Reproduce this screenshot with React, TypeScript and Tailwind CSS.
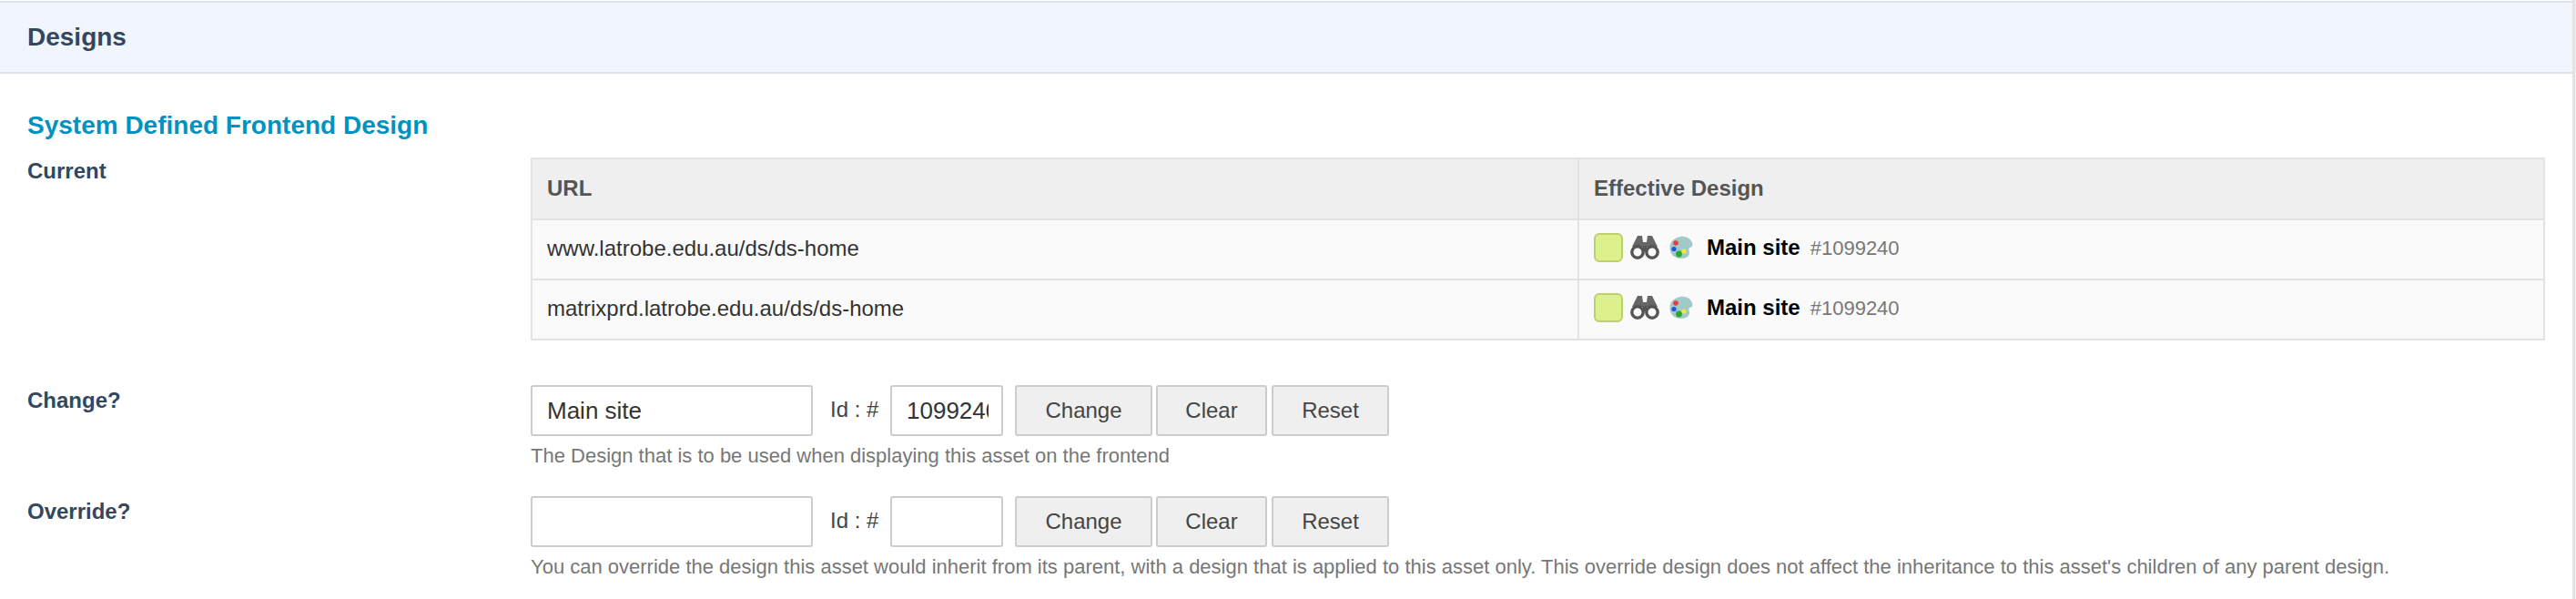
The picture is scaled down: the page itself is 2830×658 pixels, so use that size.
import React from "react";

const sans = "font-['Liberation_Sans',Arial,sans-serif]";

function Binoculars() {
  return (
    <svg width="32" height="28" viewBox="0 0 32 28" className="blur-[0.6px]">
      <path d="M8 1 L13 1 L14 8 L18 8 L19 1 L24 1 L30 13 L2 13 Z" fill="#666" />
      <circle cx="8" cy="19" r="6.2" fill="#fafafa" stroke="#555" strokeWidth="3.4" />
      <circle cx="24" cy="19" r="6.2" fill="#fafafa" stroke="#555" strokeWidth="3.4" />
      <rect x="13.5" y="12" width="5" height="6" fill="#555" />
    </svg>
  );
}

function Palette() {
  return (
    <svg width="26" height="26" viewBox="0 0 26 26" className="blur-[0.6px]">
      <path d="M12 1 C19 0 25 4 25.5 10 C25.5 12.5 22.5 12.5 21.5 14 C20.5 16 24 19 20 23 C16 26 8 25.5 4 22 C0 18 -0.5 11 2 7 C4.5 3.5 8 1.5 12 1 Z" fill="#9fcac7" />
      <circle cx="7" cy="8" r="2.8" fill="#ea3b3b" />
      <circle cx="5" cy="14.5" r="2.6" fill="#1f55e6" />
      <circle cx="10.5" cy="20" r="3.4" fill="#2fa52f" />
      <circle cx="16" cy="17" r="2.6" fill="#f4e93a" />
    </svg>
  );
}

function DesignCell() {
  return (
    <div className="flex items-center relative -top-[1px]">
      <span className="w-[32px] h-[32px] rounded-[6px] bg-[#dcf08c] border-2 border-[#bfcf70] shrink-0" />
      <span className="ml-[8px] flex"><Binoculars /></span>
      <span className="ml-[11px] flex"><Palette /></span>
      <span className="ml-[15px] text-[24px] font-bold text-black">Main site</span>
      <span className="ml-[11px] text-[22px] text-[#777]">#1099240</span>
    </div>
  );
}

function PickerRow({ label, name, id, help, className }: { label: string; name: string; id: string; help: string; className: string }) {
  const field = "h-[56px] bg-white border-2 border-[#ccc] rounded-[3px] pl-[16px] pr-[14px] text-[26px] text-[#333] outline-none";
  const btn = "h-[56px] bg-[#efefef] border-2 border-[#ccc] rounded-[3px] text-[24px] text-[#444]";
  return (
    <div className={`flex ${className}`}>
      <div className="w-[583px] pl-[30px] pt-[3px] text-[24px] leading-[28px] font-bold text-[#34475f] shrink-0">{label}</div>
      <div>
        <div className="flex items-center">
          <input readOnly value={name} className={`${field} w-[310px]`} />
          <span className="ml-[19px] w-[66px] text-[24px] text-[#444] -mt-[2px]">Id : #</span>
          <input readOnly value={id} className={`${field} w-[124px]`} />
          <button className={`${btn} ml-[13px] w-[151px]`}>Change</button>
          <button className={`${btn} ml-[4px] w-[122px]`}>Clear</button>
          <button className={`${btn} ml-[5px] w-[129px]`}>Reset</button>
        </div>
        <p className="mt-[9px] text-[22px] leading-[26px] text-[#777] whitespace-nowrap">{help}</p>
      </div>
    </div>
  );
}

export default function App() {
  const th = "border-2 border-[#e3e3e3] pl-[16px] pr-[18px] pb-[2px] text-left text-[24px] font-bold text-[#555]";
  const td = "border-2 border-[#e3e3e3] pl-[16px] pr-[18px] pb-[2px] text-[24px] text-[#333]";
  return (
    <div className={`${sans} w-[2830px] h-[658px] bg-[#f1f1f1] overflow-hidden`}>
      <div className="w-[2829px] h-[658px] bg-white border-r-[3px] border-[#e3e3e3]">
        <div className="pt-[1px]">
          <div className="h-[80px] bg-[#f1f6fe] border-y-2 border-[#dde3ed] flex items-center pl-[30px] text-[28px] font-bold text-[#34475f]">
            Designs
          </div>
        </div>
        <h2 className="mt-[40px] pl-[30px] text-[28px] leading-[34px] font-bold text-[#0093c1]">System Defined Frontend Design</h2>
        <div className="flex mt-[18px]">
          <div className="w-[583px] pl-[30px] pt-[1px] text-[24px] leading-[28px] font-bold text-[#34475f] shrink-0">Current</div>
          <table className="w-[2213px] border-collapse table-fixed h-[199px]">
            <thead>
              <tr className="bg-[#efefef] h-[67px]">
                <th className={`${th} w-[1150px]`}>URL</th>
                <th className={th}>Effective Design</th>
              </tr>
            </thead>
            <tbody>
              {["www.latrobe.edu.au/ds/ds-home", "matrixprd.latrobe.edu.au/ds/ds-home"].map((u) => (
                <tr key={u} className="bg-[#fafafa] h-[66px]">
                  <td className={td}>{u}</td>
                  <td className={td}><DesignCell /></td>
                </tr>
              ))}
            </tbody>
          </table>
        </div>
        <PickerRow
          className="mt-[49px]"
          label="Change?"
          name="Main site"
          id="1099240"
          help="The Design that is to be used when displaying this asset on the frontend"
        />
        <PickerRow
          className="mt-[31px]"
          label="Override?"
          name=""
          id=""
          help="You can override the design this asset would inherit from its parent, with a design that is applied to this asset only. This override design does not affect the inheritance to this asset's children of any parent design."
        />
      </div>
    </div>
  );
}
